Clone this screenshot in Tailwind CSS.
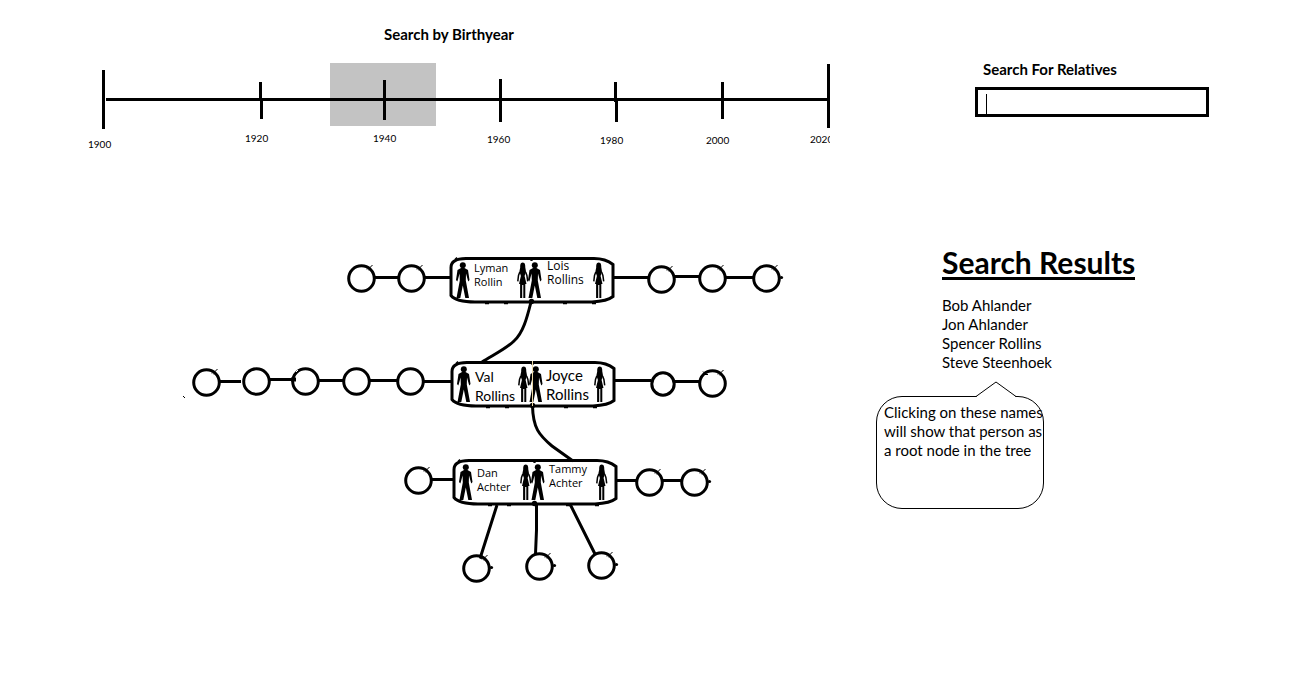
<!DOCTYPE html>
<html lang="en">
<head>
<meta charset="utf-8">
<meta name="viewport" content="width=device-width, initial-scale=1">
<title>Family tree search</title>
<script src="https://cdn.jsdelivr.net/npm/@tailwindcss/browser@4"></script>
</head>
<body class="bg-white text-black font-['Lato',sans-serif] text-[15px] [font-variant-ligatures:none]">
<main class="grid grid-cols-[minmax(0,1fr)_434px] min-h-screen">

  <div class="flex flex-col items-start pt-6">
    <section class="pl-[88px]">
      <h2 class="pl-[296px] text-[15px] leading-5 font-bold">Search by Birthyear</h2>
      <svg class="mt-4 block overflow-hidden" width="742" height="92" viewBox="88 60 742 92" role="img" aria-label="Timeline from 1900 to 2020">
        <rect x="330" y="63" width="106" height="63" fill="#c3c3c3"/>
        <g fill="#000">
          <rect x="106" y="98" width="723" height="3"/>
          <rect x="102" y="70" width="3" height="59"/>
          <rect x="259" y="82" width="3" height="18"/><rect x="260" y="99" width="3" height="20"/>
          <rect x="383" y="80" width="3" height="40"/>
          <rect x="499" y="79" width="3" height="43"/>
          <rect x="614" y="82" width="3" height="20"/><rect x="615" y="101" width="3" height="21"/>
          <rect x="721" y="82" width="3" height="37"/>
          <rect x="827" y="64" width="3" height="64"/>
        </g>
        <g class="text-[10px]">
          <text x="88" y="148">1900</text>
          <text x="245" y="142">1920</text>
          <text x="373" y="142">1940</text>
          <text x="487" y="143">1960</text>
          <text x="600" y="144">1980</text>
          <text x="706" y="144">2000</text>
          <text x="810" y="143">2020</text>
        </g>
      </svg>
    </section>

    <section class="mt-[98px] pl-[180px]">
      <svg class="block" width="620" height="340" viewBox="180 250 620 340" role="img" aria-label="Family tree">
        <defs>
          <g id="man">
            <circle cx="6.8" cy="2.8" r="3"/>
            <path d="M1.500 7.500 L5 5.500 H8.500 L12 7.500 L13.500 17.500 L12.300 19 L11.800 17.500 L10 11 L9.800 18 L13 35.500 H9.300 L6.800 23 L4.300 35.500 H0.500 L3.800 18 L3.600 11 L1.800 17.500 L1.300 19 L0 17.500 Z"/>
          </g>
          <g id="woman">
            <path d="M5.700 0 C8.300 0 8.300 3 8.300 5 L9 9 L7.600 13.500 L9.500 21.500 H8.300 V35.500 H6.300 V22.500 H5.200 V35.500 H3.100 V21.500 H2 L3.900 13.500 L2.400 9 L3.200 5 C3.200 3 3.200 0 5.700 0 Z"/>
            <path d="M2.800 9.500 L1.500 13 L0.800 18.800 M8.600 9.500 L9.900 13 L10.700 18.800" fill="none" stroke="#000" stroke-width="1.500"/>
          </g>
          <g id="couple">
            <path d="M0 9 C0 2 6 0 15 0 H143 C151 0 157 2 162 6 V38 C157 42 149 43 141 43.5 H24 C12 43.5 4 42 0 37 Z" fill="#fff" stroke="#000" stroke-width="3"/>
            <path d="M4 1 l2 -2 M34 45 h4 M53 45 h4 M112 45 h4 M141 45 h4" stroke="#000" stroke-width="1.5"/>
            <use href="#man" x="5" y="4"/>
            <use href="#woman" x="66" y="4"/>
            <use href="#man" x="77" y="4"/>
            <use href="#woman" x="142" y="4"/>
            <circle cx="80.5" cy="1" r="1.5"/>
            <circle cx="80.5" cy="43" r="2.7"/>
          </g>
          <circle id="plain" r="12.8" fill="#fff" stroke="#000" stroke-width="3"/>
          <g id="node">
            <use href="#plain"/>
            <path d="M5 -9.5 h1 M7 -8.5 h1 M8 -10.5 l3 -3" stroke="#000" stroke-width="1"/>
          </g>
          <g id="end">
            <use href="#node"/>
            <circle cx="15" cy="-1" r="1.6"/>
          </g>
        </defs>

        <g fill="none" stroke="#000" stroke-width="3">
          <path d="M375 277.5 H398 M425 277.5 H451 M613 277.5 H649 M675 276.5 H700 M726 277.5 H753"/>
          <path d="M219 381.5 H241 M270 379.5 H294 M318 380.5 H343 M369 380.5 H398 M423 381.5 H452 M614 380.5 H651 M675 381.5 H700"/>
          <path d="M431 479.5 H454 M616 480.5 H636 M662 480.5 H682"/>
          <path d="M497 505 L480.500 557 M536.500 505 V530 L535.500 554 M570.500 505 L595 554"/>
        </g>

        <g>
          <use href="#node" x="361.5" y="278.5"/><use href="#node" x="411.5" y="278.5"/>
          <use href="#node" x="661.5" y="279.5"/><use href="#node" x="712.5" y="278.5"/><use href="#end" x="766.5" y="278.5"/>
          <use href="#node" x="206.5" y="382.5"/><use href="#plain" x="256.5" y="381.5"/><use href="#plain" x="305.5" y="381.5"/>
          <use href="#plain" x="356.5" y="381.5"/><use href="#plain" x="410.5" y="381.5"/>
          <circle cx="663" cy="384" r="11.2" fill="#fff" stroke="#000" stroke-width="3"/>
          <use href="#node" x="712.5" y="383.5"/>
          <use href="#node" x="418.5" y="480.5"/><use href="#node" x="649.5" y="482.5"/><use href="#end" x="694.5" y="482.5"/>
          <use href="#end" x="476.5" y="568.5"/><use href="#end" x="539.5" y="566.5"/><use href="#end" x="601.500" y="565.5"/>
          <path d="M183 396.500 h1 M184 397.500 h1 M703 371.500 l3 3 M704 374.500 h4" stroke="#000" stroke-width="1"/>
          <path d="M291 379.5 h5" stroke="#000" stroke-width="4"/>
          <path d="M296 372 l2 -2" stroke="#fff" stroke-width="1"/>
          <circle cx="481" cy="557" r="2"/>
        </g>

        <use href="#couple" x="451" y="258.5"/>
        <use href="#couple" x="452" y="362.500"/>
        <use href="#couple" x="454" y="460.500"/>

        <g fill="none" stroke="#000" stroke-width="3">
          <path d="M531 302 C527 318 523 333 514 341 C507 348 495 354 482 362"/>
          <path d="M532.500 406 C533 428 539 435 552 446 L573 461"/>
        </g>
        <path d="M532.500 361 V406" stroke="#ecd9a8" stroke-width="1"/>

        <g class="font-['Open_Sans',sans-serif] text-[11px]">
          <text x="474" y="272">Lyman</text><text x="474" y="286">Rollin</text>
          <text x="477" y="477">Dan</text><text x="477" y="491">Achter</text>
          <text x="549" y="473">Tammy</text><text x="549" y="487">Achter</text>
        </g>
        <g class="font-['Open_Sans',sans-serif] text-[12px]">
          <text x="547" y="270">Lois</text><text x="547" y="284">Rollins</text>
        </g>
        <g class="text-[14px]">
          <text x="475" y="382">Val</text><text x="475" y="401">Rollins</text>
        </g>
        <g class="text-[15px]">
          <text x="546" y="381">Joyce</text><text x="546" y="400">Rollins</text>
        </g>
      </svg>
    </section>
  </div>

  <aside class="flex flex-col items-start pt-[59px]">
    <form class="ml-[106px] flex flex-col" role="search">
      <label for="relatives" class="pl-2 text-[15px] leading-5 font-bold">Search For Relatives</label>
      <div class="relative mt-2">
        <input id="relatives" type="text" class="block h-[30px] w-[234px] border-3 border-black bg-white px-2 outline-none">
        <span class="absolute left-[11px] top-[7px] h-5 w-px bg-black" aria-hidden="true"></span>
      </div>
    </form>

    <section class="mt-[130px] ml-[73px]">
      <h1 class="border-b-3 border-black text-[30px] leading-[30px] font-bold">Search Results</h1>
      <ul class="mt-4 leading-[19px]">
        <li><a href="#bob">Bob Ahlander</a></li>
        <li><a href="#jon">Jon Ahlander</a></li>
        <li><a href="#spencer">Spencer Rollins</a></li>
        <li><a href="#steve">Steve Steenhoek</a></li>
      </ul>
    </section>

    <div class="relative mt-6 ml-[7px] h-[113px] w-[168px] rounded-[26px] border border-black pt-1.5 pl-[7px]">
      <svg class="absolute left-[98px] -top-4" width="44" height="17" viewBox="0 0 44 17" aria-hidden="true">
        <rect x="2" y="15" width="38" height="2" fill="#fff"/>
        <path d="M1 15.500 L21 1 L41 15.500" fill="#fff" stroke="#000"/>
      </svg>
      <p class="relative leading-[19px] whitespace-nowrap">Clicking on these names<br>will show that person as<br>a root node in the tree</p>
    </div>
  </aside>
</main>
</body>
</html>
